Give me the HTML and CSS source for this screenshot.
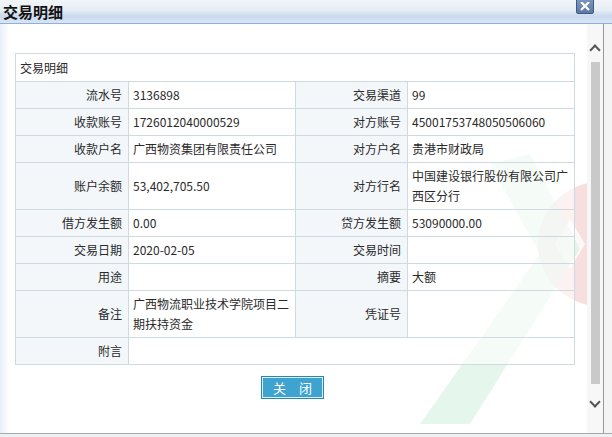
FILE: index.html
```html
<!DOCTYPE html>
<html lang="zh-CN">
<head>
  <meta charset="UTF-8">
  <title>交易明细</title>
  <link rel="stylesheet" href="styles.css">
</head>
<body>
  <div class="window">
    <div class="titlebar">
      <span class="title">交易明细</span>
      <span class="close-btn">
        <svg width="10" height="9" viewBox="0 0 10 9"><path d="M1 0 L9 8 M9 0 L1 8" stroke="#fff" stroke-width="2.2"/></svg>
      </span>
    </div>
    <div class="frame">
      <div class="content">
        <svg class="watermark" width="210" height="300" viewBox="0 0 210 300">
          <path d="M220 48 A62 62 0 0 0 220 172 Z" fill="#f2c4c4" opacity="0.55"/>
          <path d="M190 85 L205 110 L190 135 L175 110 Z" fill="#ffffff" opacity="0.8"/>
          <path d="M110 30 L150 20 L200 115 L90 290 L40 290 L160 120 Z" fill="#cfeedd" opacity="0.55"/>
        </svg>
        <table class="detail">
          <colgroup>
            <col class="c-label">
            <col class="c-value">
            <col class="c-label2">
            <col class="c-value">
          </colgroup>
          <tr><td class="caption" colspan="4">交易明细</td></tr>
          <tr>
            <td class="label">流水号</td><td class="value">3136898</td>
            <td class="label">交易渠道</td><td class="value">99</td>
          </tr>
          <tr>
            <td class="label">收款账号</td><td class="value">1726012040000529</td>
            <td class="label">对方账号</td><td class="value">45001753748050506060</td>
          </tr>
          <tr>
            <td class="label">收款户名</td><td class="value">广西物资集团有限责任公司</td>
            <td class="label">对方户名</td><td class="value">贵港市财政局</td>
          </tr>
          <tr class="tall">
            <td class="label">账户余额</td><td class="value">53,402,705.50</td>
            <td class="label">对方行名</td><td class="value">中国建设银行股份有限公司广西区分行</td>
          </tr>
          <tr>
            <td class="label">借方发生额</td><td class="value">0.00</td>
            <td class="label">贷方发生额</td><td class="value">53090000.00</td>
          </tr>
          <tr>
            <td class="label">交易日期</td><td class="value">2020-02-05</td>
            <td class="label">交易时间</td><td class="value"></td>
          </tr>
          <tr>
            <td class="label">用途</td><td class="value"></td>
            <td class="label">摘要</td><td class="value">大额</td>
          </tr>
          <tr class="tall">
            <td class="label">备注</td><td class="value">广西物流职业技术学院项目二期扶持资金</td>
            <td class="label">凭证号</td><td class="value"></td>
          </tr>
          <tr>
            <td class="label">附言</td><td class="value" colspan="3"></td>
          </tr>
        </table>
        <div class="actions">
          <button type="button" class="btn">关　闭</button>
        </div>
      </div>
      <div class="scrollbar">
        <span class="arrow up"></span>
        <div class="thumb"></div>
        <span class="arrow down"></span>
      </div>
      <div class="edge"></div>
    </div>
    <div class="bottom"></div>
  </div>
</body>
</html>
```

FILE: styles.css
```css
html, body {
  margin: 0;
  padding: 0;
  background: #ffffff;
}
body {
  font-family: "Noto Sans CJK SC", "Noto Sans", sans-serif;
  font-size: 12px;
  color: #2a2a2a;
  width: 612px;
  height: 437px;
  overflow: hidden;
}
.window {
  display: flex;
  flex-direction: column;
  height: 437px;
}
.titlebar {
  height: 23px;
  flex: none;
  display: flex;
  align-items: center;
  justify-content: space-between;
  background: linear-gradient(to bottom, #f2f5f9 0%, #e6edf5 45%, #c9d9ee 70%, #d9e5f3 100%);
  border-bottom: 1px solid #8fb0d8;
  position: relative;
}
.title {
  font-size: 15px;
  font-weight: bold;
  color: #111;
  padding-left: 3px;
}
.close-btn {
  position: absolute;
  right: 18px;
  top: -2px;
  width: 16px;
  height: 14px;
  background: linear-gradient(to bottom, #7e97bd, #5c78a4);
  border: 1px solid #3d5a86;
  border-radius: 0 0 2px 2px;
  display: flex;
  align-items: center;
  justify-content: center;
}
.frame {
  flex: 1;
  display: flex;
  min-height: 0;
}
.content {
  flex: 1;
  position: relative;
  background: linear-gradient(to right, #e7f0f9 0px, #f6f9fc 6px, #ffffff 9px);
  padding: 29px 14px 0 15px;
  overflow: hidden;
}
.watermark {
  position: absolute;
  left: 380px;
  top: 110px;
  z-index: 0;
}
.detail {
  position: relative;
  z-index: 1;
  border-collapse: collapse;
  width: 559px;
  table-layout: fixed;
}
.c-label {
  width: 113px;
}
.c-value {
  width: 167px;
}
.c-label2 {
  width: 112px;
}
.detail td {
  border: 1px solid #cfd9e0;
  padding: 3px 4px;
  line-height: 20px;
  height: 20px;
  vertical-align: middle;
}
.detail td.caption {
  height: 21px;
  padding-left: 4px;
  background: rgba(255, 255, 255, 0.7);
}
.detail td.label {
  text-align: right;
  padding-right: 6px;
  background: rgba(240, 245, 249, 0.8);
}
.detail td.value {
  background: rgba(255, 255, 255, 0.6);
  word-break: break-all;
}
.detail tr.tall td {
  height: 40px;
  line-height: 20px;
}
.actions {
  position: relative;
  z-index: 1;
  display: flex;
  justify-content: center;
  padding-top: 11px;
  padding-right: 3px;
}
.btn {
  width: 63px;
  height: 23px;
  padding: 0;
  background: #3ea3cf;
  color: #fff;
  font-family: "Noto Sans CJK SC", sans-serif;
  font-size: 13px;
  line-height: 19px;
  border: 1px solid #2f86ad;
  box-shadow: inset 0 0 0 1px #d8eef8;
  cursor: pointer;
}
.scrollbar {
  width: 16px;
  flex: none;
  background: #f7f7f7;
  display: flex;
  flex-direction: column;
  align-items: center;
  padding-top: 20px;
}
.arrow {
  width: 6px;
  height: 6px;
  border-left: 2px solid #555;
  border-top: 2px solid #555;
}
.arrow.up {
  transform: rotate(45deg);
  margin-top: 2px;
}
.arrow.down {
  transform: rotate(225deg);
  margin-top: 14px;
}
.thumb {
  width: 9px;
  height: 322px;
  margin-top: 8px;
  background: #c9c9c9;
}
.edge {
  width: 8px;
  flex: none;
  border-left: 1px solid #9a9a9a;
  background: #f4f4f4;
}
.bottom {
  height: 3px;
  flex: none;
  border-top: 1px solid #a8a8a8;
  background: #eef1f4;
}
```
